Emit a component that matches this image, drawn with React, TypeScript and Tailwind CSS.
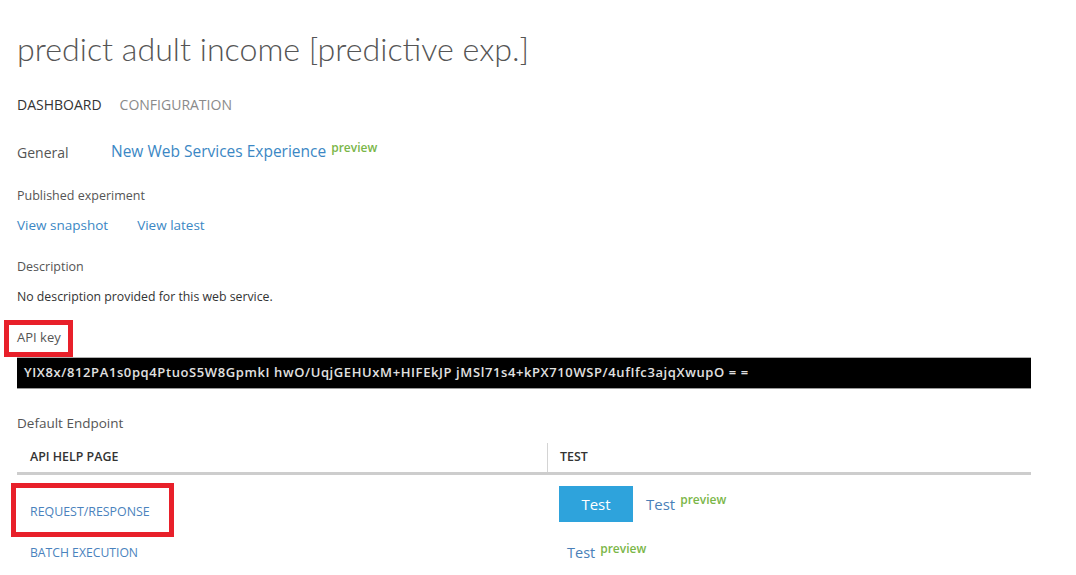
const FONT = "font-['Open_Sans','Noto_Sans',sans-serif]";

const Preview = ({ className = "" }: { className?: string }) => (
  <span className={`ml-[5px] text-[12px] font-semibold text-[#7ab648] relative -top-[4px] ${className}`}>
    preview
  </span>
);

const apiKey =
  "YIX8x/812PA1s0pq4PtuoS5W8GpmkI hwO/UqjGEHUxM+HIFEkJP jMSl71s4+kPX710WSP/4ufIfc3ajqXwupO = =";

export default function App() {
  return (
    <div className={`min-h-[575px] w-[1076px] bg-white px-[17px] ${FONT}`}>
      {/* Title */}
      <h1 className="pt-[29px] h-[70px] font-['Lato',sans-serif] text-[32.2px] leading-[40px] font-light text-[#555]">
        predict adult income [predictive exp.]
      </h1>

      {/* Tabs */}
      <div className="mt-[24px] flex h-[20px] items-center gap-[18px] text-[14px] uppercase">
        <span className="text-[#333]">Dashboard</span>
        <span className="text-[#8a8a8a]">Configuration</span>
      </div>

      {/* General */}
      <div className="mt-[26px] flex h-[24px] items-center text-[14px]">
        <span className="w-[94px] text-[#555]">General</span>
        <span className="text-[15.5px] text-[#3b87c4]">New Web Services Experience</span>
        <Preview />
      </div>

      <div className="mt-[22px] flex h-[20px] items-center text-[12.5px] text-[#555]">
        Published experiment
      </div>
      <div className="mt-[9px] flex h-[20px] items-center gap-[29px] text-[13.5px] text-[#3b87c4]">
        <span>View snapshot</span>
        <span>View latest</span>
      </div>

      <div className="mt-[22px] flex h-[20px] items-center text-[12.5px] text-[#555]">Description</div>
      <div className="mt-[10px] flex h-[20px] items-center text-[12.3px] text-[#333]">
        No description provided for this web service.
      </div>

      {/* API key */}
      <div className="mt-[21px] flex h-[20px] items-center text-[13px] text-[#555]">
        <span className="relative">
          API key
          <span className="absolute -left-[13px] -top-[8px] -right-[12px] -bottom-[9px] border-[5px] border-[#e8202a]" />
        </span>
      </div>
      <div className="mt-[9px] flex h-[32px] w-[1014px] items-center border-y border-t-[#b0b0b0] border-b-[#9a9a9a] bg-black pl-[7px] text-[13px] font-semibold tracking-[0.6px] text-[#e0e0e0] whitespace-nowrap overflow-hidden">
        {apiKey}
      </div>

      {/* Default endpoint */}
      <div className="mt-[24px] flex h-[20px] items-center text-[13.5px] text-[#555]">Default Endpoint</div>

      <div className="mt-[10px] w-[1014px]">
        <div className="grid h-[32px] grid-cols-[530px_1fr] border-b-[3px] border-[#cdcdcd] text-[12.4px] font-semibold text-[#333]">
          <div className="flex items-center pl-[13px]">API HELP PAGE</div>
          <div className="flex items-center border-l border-[#d4d4d4] pl-[12px]">TEST</div>
        </div>

        <div className="grid grid-cols-[530px_1fr] pt-[11px]">
          <div className="flex h-[36px] items-end pl-[13px] text-[12.4px] uppercase text-[#4a82bd]">
            <span className="relative leading-[16px] mb-[2px]">
              Request/Response
              <span className="absolute -left-[19px] -top-[21px] -right-[24px] -bottom-[17px] border-[5px] border-[#e8202a]" />
            </span>
          </div>
          <div className="flex h-[36px] items-center pl-[12px]">
            <button className="flex h-[36px] w-[74px] items-center justify-center bg-[#2ea3dc] text-[15px] text-white">
              Test
            </button>
            <span className="ml-[13px] text-[15px] text-[#4a7fb8]">Test</span>
            <Preview />
          </div>
        </div>

        <div className="grid grid-cols-[530px_1fr] pt-[21px]">
          <div className="flex h-[20px] items-center pl-[13px] text-[12.2px] uppercase text-[#4a82bd]">
            Batch Execution
          </div>
          <div className="flex h-[20px] items-center pl-[20px]">
            <span className="text-[14.5px] text-[#4a7fb8]">Test</span>
            <Preview />
          </div>
        </div>
      </div>
    </div>
  );
}
